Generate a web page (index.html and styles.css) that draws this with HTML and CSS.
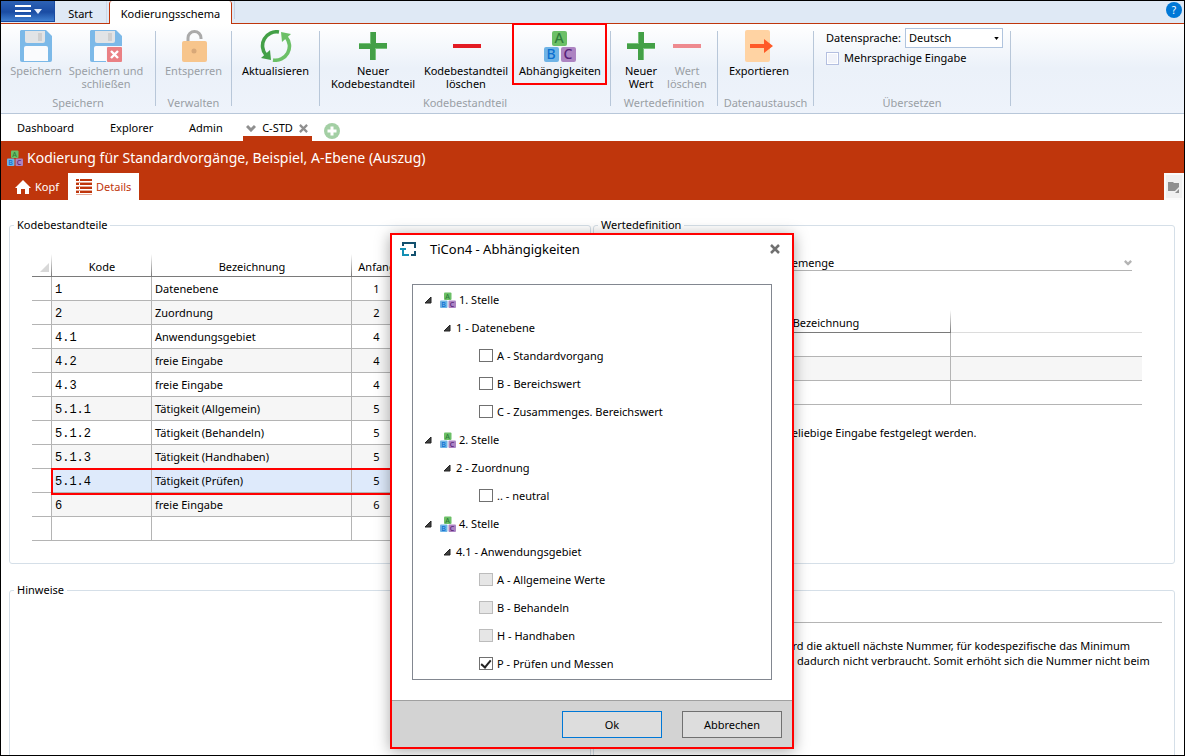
FILE: index.html
```html
<!DOCTYPE html>
<html lang="de">
<head>
<meta charset="utf-8">
<title>TiCon4 - Kodierungsschema</title>
<link rel="stylesheet" href="styles.css">
</head>
<body>
<svg class="sprites" aria-hidden="true">
  <symbol id="abc" viewBox="0 0 32 32">
    <rect x="8" y="1" width="15" height="15" rx="2" fill="#6cc067"/>
    <rect x="0" y="17" width="15" height="15" rx="2" fill="#6fb4e6"/>
    <rect x="17" y="17" width="15" height="15" rx="2" fill="#ad84c2"/>
    <g class="abc-letters">
      <text x="15" y="13" fill="#2f7d3a">A</text>
      <text x="7" y="29" fill="#0a6fd0">B</text>
      <text x="24" y="29" fill="#571f78">C</text>
    </g>
  </symbol>
  <symbol id="disk" viewBox="0 0 32 32">
    <path d="M1 0H26L32 6V30a2 2 0 0 1-2 2H2a2 2 0 0 1-2-2V1z" fill="#7cb9e8"/>
    <path d="M5 1H25V11a2 2 0 0 1-2 2H7a2 2 0 0 1-2-2z" fill="#e2e4e6"/>
    <rect x="18" y="3" width="4" height="8" fill="#cfcfcf"/>
    <path d="M4 18a2 2 0 0 1 2-2H26a2 2 0 0 1 2 2V31H4z" fill="#fafbfd"/>
  </symbol>
  <symbol id="plus" viewBox="0 0 32 32">
    <path d="M13 2h6v11h11v6H19v11h-6V19H2v-6h11z" fill="#43a047"/>
    <path d="M13 2h1v12H2v-1h11zM18 30h1V19h11v-1H18z" fill="#78c27b"/>
  </symbol>
  <symbol id="tri" viewBox="0 0 8 8"><path d="M7 1V7H1z" fill="#404040" stroke="#222" stroke-width="1"/></symbol>
  <symbol id="chev" viewBox="0 0 10 8"><path d="M1 2L5 6L9 2" fill="none" stroke="currentColor" stroke-width="3"/></symbol>
  <symbol id="cross" viewBox="0 0 10 10"><path d="M1 1L9 9M9 1L1 9" fill="none" stroke="currentColor" stroke-width="2.5"/></symbol>
</svg>

<div class="window">
  <nav class="ribbon-tabs">
    <button class="app-menu" aria-label="Menü"><svg width="28" height="14" viewBox="0 0 28 14"><path d="M0 2H16M0 7H16M0 12H16" stroke="#fff" stroke-width="2"/><path d="M19 5H27L23 10z" fill="#e8f0ff"/></svg></button>
    <button class="rtab">Start</button>
    <button class="rtab active">Kodierungsschema</button>
    <span class="tab-edge"></span>
    <button class="help" aria-label="Hilfe">?</button>
  </nav>

  <div class="ribbon">
    <section class="group g-save">
      <div class="tools">
        <button class="tool w56" disabled><svg class="ico"><use href="#disk"/></svg>Speichern</button>
        <button class="tool w84" disabled><svg class="ico" viewBox="0 0 32 32"><use href="#disk"/><rect x="16" y="16" width="17" height="17" fill="#f4f7fc"/><rect x="17" y="17" width="15" height="15" rx="1" fill="#ea8084"/><path d="M21 21l7 7M28 21l-7 7" stroke="#fff" stroke-width="2.4"/></svg>Speichern und schließen</button>
      </div>
      <h2>Speichern</h2>
    </section>
    <section class="group g-manage">
      <div class="tools center">
        <button class="tool w66" disabled><svg class="ico" viewBox="0 0 32 32"><path d="M10 11V8a6.500 6.500 0 0 1 13 0V9" fill="none" stroke="#aaa" stroke-width="3"/><rect x="4" y="11" width="25" height="21" rx="2" fill="#f7c58c"/><circle cx="16" cy="21" r="2.500" fill="#d8a878"/></svg>Entsperren</button>
      </div>
      <h2>Verwalten</h2>
    </section>
    <section class="group g-refresh">
      <div class="tools center">
        <button class="tool w84"><svg class="ico" viewBox="0 0 32 32"><path d="M19 2A14 14 0 0 0 6 25" fill="none" stroke="#43a047" stroke-width="3.600"/><path d="M1 28L11 30L10 20z" fill="#43a047"/><path d="M13 30A14 14 0 0 0 26 7" fill="none" stroke="#6cc067" stroke-width="3.600"/><path d="M31 4L21 2L22 12z" fill="#6cc067"/></svg>Aktualisieren</button>
      </div>
    </section>
    <section class="group g-part">
      <div class="tools">
        <button class="tool w92"><svg class="ico"><use href="#plus"/></svg>Neuer Kodebestandteil</button>
        <button class="tool w94"><svg class="ico" viewBox="0 0 32 32"><rect x="3" y="14" width="28" height="4" fill="#e31b23"/></svg>Kodebestandteil löschen</button>
        <button class="tool w94 marked"><svg class="ico"><use href="#abc"/></svg>Abhängigkeiten</button>
      </div>
      <h2>Kodebestandteil</h2>
    </section>
    <section class="group g-value">
      <div class="tools center">
        <button class="tool w46"><svg class="ico"><use href="#plus"/></svg>Neuer Wert</button>
        <button class="tool w46" disabled><svg class="ico" viewBox="0 0 32 32"><rect x="2" y="14" width="28" height="4" fill="#ee8a8f"/></svg>Wert löschen</button>
      </div>
      <h2>Wertedefinition</h2>
    </section>
    <section class="group g-export">
      <div class="tools">
        <button class="tool w68"><svg class="ico" viewBox="0 0 32 32"><rect x="2" y="0" width="25" height="32" rx="2" fill="#ffd3a3"/><path d="M7 14H21V9L30 16L21 23V18H7z" fill="#ff5a27"/></svg>Exportieren</button>
      </div>
      <h2>Datenaustausch</h2>
    </section>
    <section class="group g-lang">
      <div class="lang">
        <div class="lang-row"><label for="lang">Datensprache:</label>
          <span class="drop"><select id="lang"><option>Deutsch</option></select><svg viewBox="0 0 6 4"><path d="M0 0H6L3 4z" fill="#000"/></svg></span></div>
        <label class="multi"><input type="checkbox">Mehrsprachige Eingabe</label>
      </div>
      <h2>Übersetzen</h2>
    </section>
  </div>

  <nav class="docs">
    <a href="#" class="doc d1">Dashboard</a>
    <a href="#" class="doc d2">Explorer</a>
    <a href="#" class="doc d3">Admin</a>
    <a href="#" class="doc current"><svg width="10" height="8"><use href="#chev"/></svg><span>C-STD</span><svg width="9" height="9"><use href="#cross"/></svg></a>
    <button class="add" aria-label="Neuer Tab"><svg width="16" height="16" viewBox="0 0 16 16"><circle cx="8" cy="8" r="8" fill="#a3cfa4"/><path d="M8 3.500V12.500M3.500 8H12.500" stroke="#fff" stroke-width="3"/></svg></button>
  </nav>

  <header class="head">
    <h1><svg width="16" height="16"><use href="#abc"/></svg>Kodierung für Standardvorgänge, Beispiel, A-Ebene (Auszug)</h1>
    <div class="subtabs">
      <a href="#" class="sub"><svg width="16" height="14" viewBox="0 0 16 14"><path d="M8 0L16 8H14V14H10V9H6V14H2V8H0z" fill="#fff"/></svg>Kopf</a>
      <a href="#" class="sub on"><svg width="16" height="16" viewBox="0 0 16 16"><path d="M0 1H3M0 5H3M0 9H3M0 13H3M4 1H16M4 5H16M4 9H16M4 13H16" stroke="#bf360c" stroke-width="2"/><path d="M0 3.500H16M0 7.500H16M0 11.500H16M0 15.500H16" stroke="#e6ab98" stroke-width="1"/></svg>Details</a>
      <button class="folder" aria-label="Ordner"><svg width="12" height="12" viewBox="0 0 12 12"><path d="M0 1H5L6 2H11V6L7 10H0z" fill="#8f8f8f"/><path d="M11 8V12H7z" fill="#8f8f8f"/></svg></button>
    </div>
  </header>

  <main class="content">
    <fieldset class="box">
      <legend>Kodebestandteile</legend>
      <table class="grid parts">
        <colgroup><col class="c20"><col class="c100"><col class="c200"><col class="c50"><col></colgroup>
        <thead><tr><th><svg class="corner" viewBox="0 0 9 9"><path d="M9 0V9H0z" fill="#d8d8d8"/></svg></th><th>Kode</th><th>Bezeichnung</th><th>Anfang</th><th></th></tr></thead>
        <tbody>
          <tr><td></td><td>1</td><td>Datenebene</td><td>1</td><td></td></tr>
          <tr><td></td><td>2</td><td>Zuordnung</td><td>2</td><td></td></tr>
          <tr><td></td><td>4.1</td><td>Anwendungsgebiet</td><td>4</td><td></td></tr>
          <tr><td></td><td>4.2</td><td>freie Eingabe</td><td>4</td><td></td></tr>
          <tr><td></td><td>4.3</td><td>freie Eingabe</td><td>4</td><td></td></tr>
          <tr><td></td><td>5.1.1</td><td>Tätigkeit (Allgemein)</td><td>5</td><td></td></tr>
          <tr><td></td><td>5.1.2</td><td>Tätigkeit (Behandeln)</td><td>5</td><td></td></tr>
          <tr><td></td><td>5.1.3</td><td>Tätigkeit (Handhaben)</td><td>5</td><td></td></tr>
          <tr class="selected"><td></td><td>5.1.4</td><td>Tätigkeit (Prüfen)</td><td>5</td><td></td></tr>
          <tr><td></td><td>6</td><td>freie Eingabe</td><td>6</td><td></td></tr>
          <tr><td></td><td></td><td></td><td></td><td></td></tr>
        </tbody>
      </table>
    </fieldset>

    <fieldset class="box">
      <legend>Wertedefinition</legend>
      <div class="combo"><select aria-label="Wertemenge"><option>Wertemenge</option></select><svg width="8" height="7" viewBox="0 0 10 8"><use href="#chev"/></svg></div>
      <table class="grid values">
        <colgroup><col class="c20"><col class="c65"><col class="c250"><col></colgroup>
        <thead><tr><th></th><th></th><th>Bezeichnung</th><th></th></tr></thead>
        <tbody>
          <tr><td></td><td></td><td></td><td></td></tr>
          <tr><td></td><td></td><td></td><td></td></tr>
          <tr><td></td><td></td><td></td><td></td></tr>
        </tbody>
      </table>
      <p class="info">beliebige Eingabe festgelegt werden.</p>
    </fieldset>

    <fieldset class="box">
      <legend>Hinweise</legend>
    </fieldset>

    <fieldset class="box bare">
      <div class="line"></div>
      <p class="note">wird die aktuell nächste Nummer, für kodespezifische das Minimum<br><span>dadurch nicht verbraucht. Somit erhöht sich die Nummer nicht beim</span></p>
    </fieldset>
  </main>
</div>

<div class="dialog" role="dialog" aria-labelledby="dlg-title">
  <div class="dlg-head">
    <svg width="16" height="14" viewBox="0 0 16 14"><path d="M3 4V1H15V6M15 9V13H11" fill="none" stroke="#12506e" stroke-width="2"/><path d="M0 7H6M3 6V13H9" fill="none" stroke="#1490b4" stroke-width="2"/></svg>
    <h2 id="dlg-title">TiCon4 - Abhängigkeiten</h2>
    <button class="close" aria-label="Schließen"><svg width="10" height="10"><use href="#cross"/></svg></button>
  </div>
  <div class="tree">
    <div class="n1"><svg class="tri"><use href="#tri"/></svg><svg class="abc16"><use href="#abc"/></svg>1. Stelle</div>
    <div class="n2"><svg class="tri"><use href="#tri"/></svg>1 - Datenebene</div>
    <label class="n3"><input type="checkbox">A - Standardvorgang</label>
    <label class="n3"><input type="checkbox">B - Bereichswert</label>
    <label class="n3"><input type="checkbox">C - Zusammenges. Bereichswert</label>
    <div class="n1"><svg class="tri"><use href="#tri"/></svg><svg class="abc16"><use href="#abc"/></svg>2. Stelle</div>
    <div class="n2"><svg class="tri"><use href="#tri"/></svg>2 - Zuordnung</div>
    <label class="n3"><input type="checkbox">.. - neutral</label>
    <div class="n1"><svg class="tri"><use href="#tri"/></svg><svg class="abc16"><use href="#abc"/></svg>4. Stelle</div>
    <div class="n2"><svg class="tri"><use href="#tri"/></svg>4.1 - Anwendungsgebiet</div>
    <label class="n3"><input type="checkbox" disabled>A - Allgemeine Werte</label>
    <label class="n3"><input type="checkbox" disabled>B - Behandeln</label>
    <label class="n3"><input type="checkbox" disabled>H - Handhaben</label>
    <label class="n3"><input type="checkbox" checked>P - Prüfen und Messen</label>
  </div>
  <div class="dlg-foot">
    <button class="btn primary">Ok</button>
    <button class="btn">Abbrechen</button>
  </div>
</div>
</body>
</html>
```
FILE: styles.css
```css
*, *::after { box-sizing: border-box; }
body {
  margin: 0;
  position: relative;
  font: 11px/16px "Noto Sans", "Open Sans", sans-serif;
  color: #000;
  background: #fff;
}
button, select, input { font: inherit; color: inherit; margin: 0; }
button { background: none; border: 0; padding: 0; }
a { color: inherit; text-decoration: none; }
h1, h2, p { margin: 0; font-weight: 400; }
svg { display: block; flex: none; }
.sprites { display: none; }
.abc-letters { font: 500 14px "Noto Sans", sans-serif; text-anchor: middle; }

.window {
  display: flex;
  flex-direction: column;
  height: 100vh;
  overflow: hidden;
  border: 1px solid #000;
}

/* Ribbon tabs */
.ribbon-tabs {
  display: flex;
  flex: none;
  height: 23px;
  background: #dfe9f5;
  border-bottom: 1px solid #bf360c;
}
.app-menu {
  display: flex;
  align-items: center;
  width: 54px;
  height: 21px;
  padding-left: 14px;
  background: linear-gradient(#2d62b5, #1a4ca3 55%, #3f7fd0);
  border-right: 1px solid #1a4ca3;
  border-bottom: 1px solid #1a4ca3;
}
.rtab { width: 52px; padding-top: 3px; border-right: 1px solid #cdd9e8; }
.rtab.active {
  width: 123px;
  height: 23px;
  margin-left: 2px;
  background: #fff;
  border: 1px solid #bf360c;
  border-bottom: 0;
  border-top: 0;
  border-radius: 3px 3px 0 0;
}
.tab-edge { width: 3px; height: 18px; border-right: 1px solid #c4d2e4; }
.help {
  width: 16px;
  height: 16px;
  margin: 1px 2px 0 auto;
  border-radius: 8px;
  background: #0078d7;
  color: #fff;
  font-size: 10px;
  line-height: 16px;
}

/* Ribbon */
.ribbon {
  display: flex;
  flex: none;
  height: 90px;
  padding: 7px 0;
  background: linear-gradient(#fff, #ebf1f9 50%, #eef3fb);
  border-bottom: 1px solid #b8c7d9;
}
.group {
  display: flex;
  flex-direction: column;
  justify-content: space-between;
  flex: none;
  border-right: 1px solid #b8c7d9;
}
.group h2 { font-size: 11px; line-height: 16px; margin-bottom: -5px; text-align: center; color: #9a9fa5; height: 16px; }
.g-save { width: 155px; }
.g-manage { width: 76px; }
.g-refresh { width: 88px; }
.g-part { width: 291px; }
.g-value { width: 107px; }
.g-export { width: 96px; }
.g-lang { width: 197px; }
.tools { display: flex; align-items: flex-start; padding-left: 7px; margin-top: -1px; }
.tools.center { justify-content: center; padding-left: 0; }
.tool {
  display: flex;
  flex-direction: column;
  align-items: center;
  line-height: 13px;
}
.tool:disabled { color: #9a9fa5; }
.ico { width: 32px; height: 32px; margin-bottom: 2px; }
.w46 { width: 46px; }
.w56 { width: 56px; }
.w66 { width: 66px; }
.w68 { width: 68px; }
.w84 { width: 84px; }
.w92 { width: 92px; }
.w94 { width: 94px; }
.marked { position: relative; height: 52px; }
.marked::after { content: ""; position: absolute; inset: -7px 0 -3px -1px; border: 2px solid #f00; }
.lang { padding: 0 7px 0 12px; margin-top: -3px; }
.lang-row { display: flex; align-items: center; gap: 4px; }
.drop { position: relative; flex: 1; }
.drop select {
  appearance: none;
  display: block;
  width: 100%;
  height: 20px;
  padding: 0 3px;
  border: 1px solid #b0c4de;
  border-radius: 0;
  background: #fff;
}
.drop svg { position: absolute; right: 4px; top: 9px; width: 5px; height: 3px; }
.multi { display: flex; align-items: center; gap: 5px; margin-top: 2px; }
.multi input { appearance: none; width: 13px; height: 13px; border: 1px solid #b4bfe0; background: #f1f3fa; box-shadow: inset 0 0 0 1px #fff; }

/* Document tabs */
.docs { display: flex; flex: none; height: 27px; line-height: 28px; padding-left: 16px; }
.d1 { width: 93px; }
.d2 { width: 79px; }
.d3 { width: 54px; }
.current { display: flex; align-items: center; justify-content: space-between; width: 69px; padding: 6px 4px 0 3px; border-bottom: 5px solid #bf360c; line-height: 16px; color: #8f8f8f; }
.current span { color: #000; }
.add { margin: 6px 0 0 12px; }

/* Page header */
.head { flex: none; background: #bf360c; color: #fff; }
.head h1 { display: flex; align-items: center; gap: 4px; height: 32px; padding: 1px 0 0 6px; font-size: 14px; }
.subtabs { display: flex; height: 27px; }
.sub { display: flex; align-items: center; gap: 4px; padding: 0 8px 0 14px; width: 67px; }
.sub.on { width: 71px; padding-left: 8px; background: #fff; color: #bf360c; }
.folder { display: flex; align-items: center; justify-content: center; width: 20px; margin-left: auto; background: #f0f0f0; border: 2px solid #fafafa; }

/* Content */
.content {
  display: grid;
  grid-template-columns: 1fr 1fr;
  grid-template-rows: 347px 200px;
  gap: 18px 2px;
  padding: 17px 9px 0 8px;
}
.box { min-width: 0; margin: 0; padding: 0 32px 0 22px; border: 1px solid #d5dfe8; border-radius: 3px; }
.box.bare { padding-right: 12px; margin-top: 8px; }
.box legend { margin-left: -18px; padding: 0 3px; height: 16px; }
.grid { width: 100%; table-layout: fixed; border-collapse: separate; border-spacing: 0; }
.grid th, .grid td { height: 24px; padding: 0 3px; border-right: 1px solid #b4b4b4; border-bottom: 1px solid #b4b4b4; }
.grid th {
  font-weight: 400;
  border-right: 0;
  border-bottom-color: #7a7a7a;
  padding-top: 5px;
  background: linear-gradient(#fff, #7a7a7a) right bottom / 1px 22px no-repeat;
}
.grid tbody tr:nth-child(even) td:not(:first-child) { background: #f6f6f6; }
.grid td:last-child { border-right: 0; }
.grid th:last-child { background: none; border-bottom-color: #dcdcdc; }
.c20 { width: 20px; }
.c50 { width: 50px; }
.c65 { width: 65px; }
.c100 { width: 100px; }
.c200 { width: 200px; }
.c250 { width: 250px; }
.parts { margin-top: 20px; }
.parts td:nth-child(2) { font: 12px/16px "Liberation Mono", monospace; padding-top: 2px; }
.parts td:nth-child(4) { text-align: center; }
.corner { width: 9px; height: 9px; margin: 0 0 0 5px; }
.grid tbody .selected td:not(:first-child) { background: #deeafb; }
.selected td:nth-child(2) { position: relative; }
.selected td:nth-child(2)::after { content: ""; position: absolute; left: -1px; top: -1px; width: 420px; height: 27px; border: 2px solid #f00; z-index: 1; }
.combo { position: relative; margin: 22px 10px 0 0; border-bottom: 1px solid #b4b4b4; }
.combo select { appearance: none; display: block; width: 100%; height: 15px; padding: 0 0 0 151px; border: 0; background: none; line-height: 15px; }
.combo svg { position: absolute; right: 0; top: 4px; color: #b4b4b4; }
.values { margin-top: 38px; }
.info { margin-top: 20px; padding-left: 169px; }
.line { margin-top: 31px; border-bottom: 1px solid #b4b4b4; }
.note { margin-top: 15px; padding-left: 165px; line-height: 15px; white-space: nowrap; }
.note span { padding-left: 16px; }

/* Dialog */
.dialog {
  position: absolute;
  z-index: 2;
  left: 390px;
  top: 233px;
  width: 404px;
  border: 2px solid #f00;
  background: #fff;
  box-shadow: 0 2px 14px rgba(0, 0, 0, .35);
}
.dlg-head { display: flex; align-items: center; height: 28px; padding: 0 12px 0 8px; }
.dlg-head h2 { flex: 1; margin-left: 14px; font-size: 13px; }
.close { color: #707070; }
.tree { margin: 21px 20px 20px; padding: 1px 0; border: 1px solid #828790; }
.tree > * { display: flex; align-items: center; height: 28px; }
.tri { width: 8px; height: 8px; }
.n1 { padding-left: 11px; }
.n2 { padding-left: 30px; gap: 5px; }
.n3 { padding-left: 66px; gap: 4px; }
.abc16 { width: 16px; height: 16px; margin: 0 3px 0 8px; }
.n3 input { appearance: none; width: 14px; height: 13px; margin-bottom: 1px; border: 1px solid #707070; background: #fff; }
.n3 input:disabled { border-color: #bcbcbc; background: #e6e6e6; }
.n3 input:checked::after { content: ""; display: block; width: 6px; height: 10px; margin: 0 0 0 3px; border: solid #222; border-width: 0 2px 2px 0; transform: rotate(40deg); }
.dlg-foot { display: flex; justify-content: flex-end; gap: 20px; padding: 10px 10px 9px; background: #d3d3d3; border-top: 1px solid #a0a0a0; }
.btn { width: 100px; height: 27px; border: 1px solid #707070; background: #ddd; }
.btn.primary { border-color: #0078d7; }
```
